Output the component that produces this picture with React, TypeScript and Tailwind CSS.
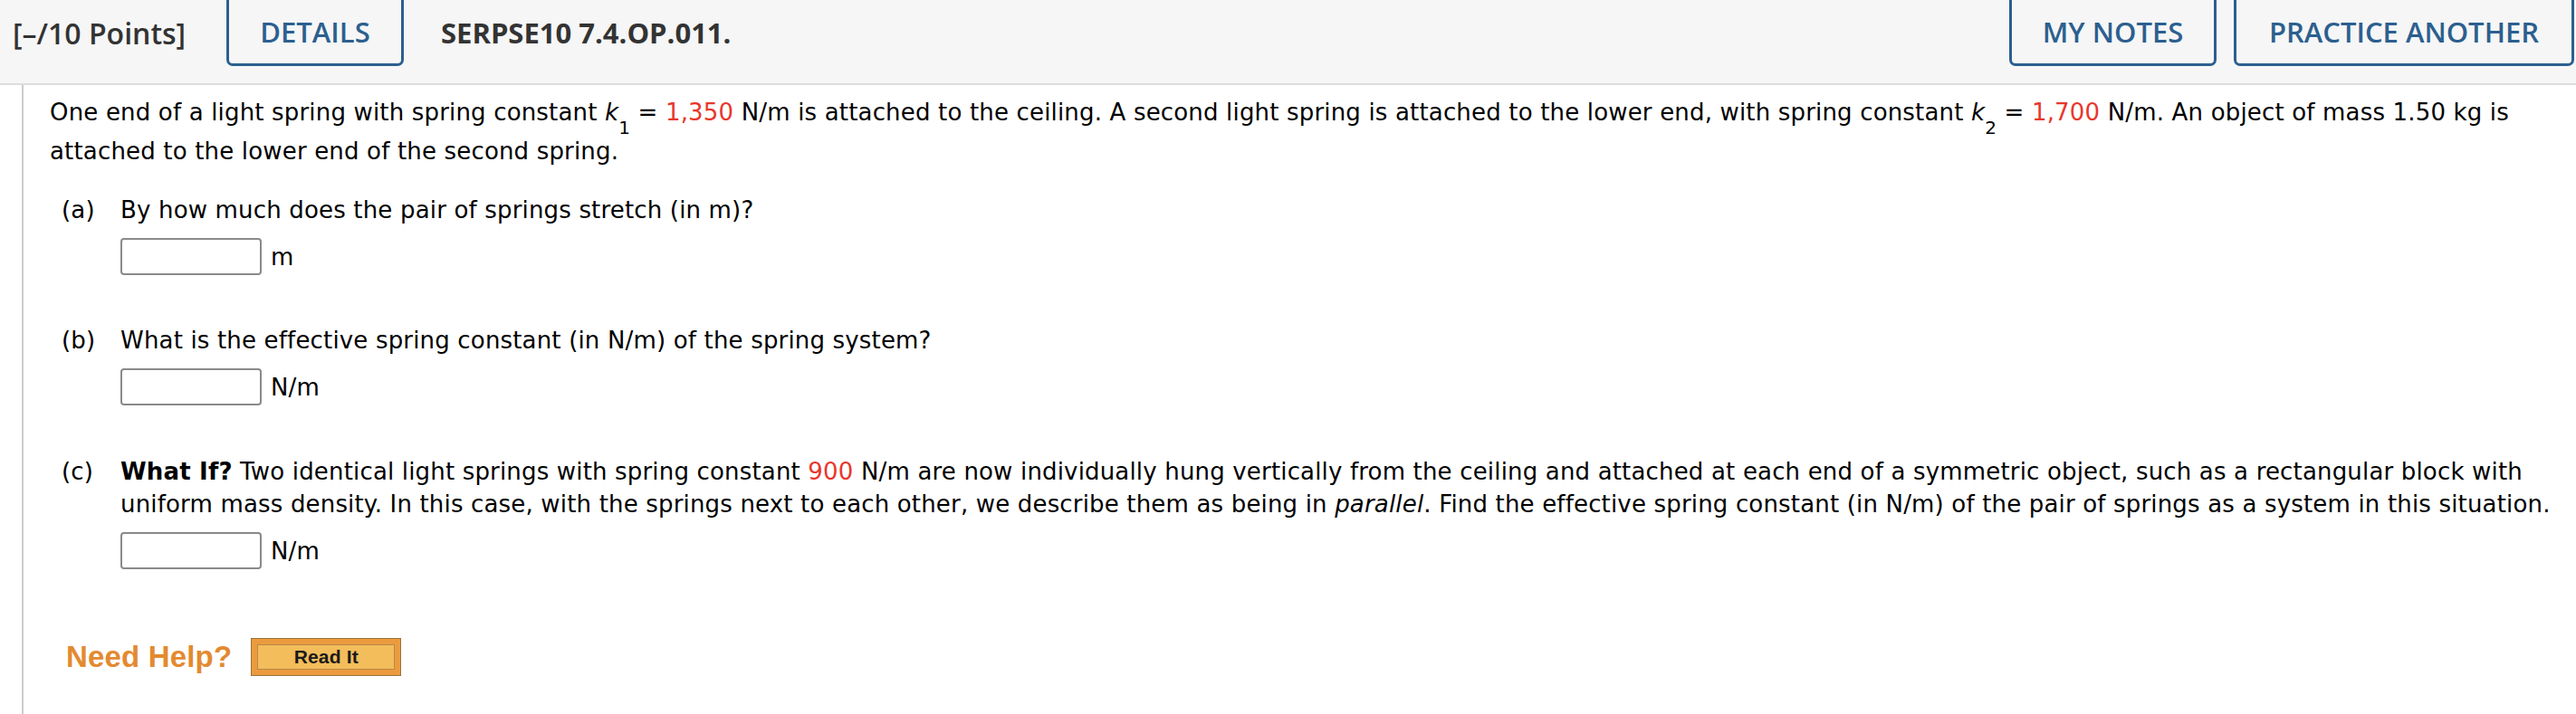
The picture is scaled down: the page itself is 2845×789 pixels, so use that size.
const Red = ({ children }: { children: React.ReactNode }) => (
  <span className="text-[#e8372c]">{children}</span>
);

const K = ({ n }: { n: string }) => (
  <span>
    <i>k</i>
    <sub className="text-[20px] align-[-10px] leading-none">{n}</sub>
  </span>
);

const AnswerBox = ({ unit }: { unit: string }) => (
  <div className="flex items-center gap-[10px]">
    <input
      type="text"
      className="w-[156px] h-[41px] rounded-[4px] border-2 border-[#8a8a8a] bg-white outline-none"
    />
    <span>{unit}</span>
  </div>
);

const Part = ({
  label,
  children,
  unit,
  className,
}: {
  label: string;
  children: React.ReactNode;
  unit: string;
  className?: string;
}) => (
  <div className={`flex pl-[13px] ${className ?? ""}`}>
    <div className="w-[65px] shrink-0">{label}</div>
    <div className="flex flex-col">
      <p>{children}</p>
      <div className="mt-[13px]">
        <AnswerBox unit={unit} />
      </div>
    </div>
  </div>
);

const headerBtn =
  "h-[73px] shrink-0 flex items-center justify-center border-[3px] border-t-0 border-[#2c5f8f] rounded-b-[7px] text-[#2c5f8f] font-semibold text-[31px]";

export default function App() {
  return (
    <div className="w-[2845px] min-h-[789px] bg-white flex flex-col">
      <header className="h-[94px] shrink-0 flex items-start bg-[#f6f6f6] border-b-2 border-[#dcdcdc] font-['Open_Sans',sans-serif]">
        <span className="w-[250px] shrink-0 pl-[14px] h-[73px] flex items-center font-semibold text-[32px] text-[#333333]">
          [–/10 Points]
        </span>
        <button className={`${headerBtn} w-[196px]`}>DETAILS</button>
        <span className="ml-[41px] h-[73px] flex items-center font-bold text-[31px] text-[#333333]">
          SERPSE10 7.4.OP.011.
        </span>
        <div className="ml-auto mr-[2px] flex gap-[19px]">
          <button className={`${headerBtn} w-[229px]`}>MY NOTES</button>
          <button className={`${headerBtn} w-[376px]`}>PRACTICE ANOTHER</button>
        </div>
      </header>

      <main className="flex-1 ml-[24px] border-l-2 border-[#cccccc] pl-[29px] pt-[9px] font-['DejaVu_Sans',Verdana,sans-serif] text-[26px] tracking-[0.17px] leading-[36px] text-black">
        <p className="leading-[42px]">
          One end of a light spring with spring constant <K n="1" /> ={" "}
          <Red>1,350</Red> N/m is attached to the ceiling. A second light spring is attached to
          the lower end, with spring constant <K n="2" /> = <Red>1,700</Red> N/m. An object of
          mass 1.50 kg is
          <br />
          attached to the lower end of the second spring.
        </p>

        <Part label="(a)" unit="m" className="mt-[26px]">
          By how much does the pair of springs stretch (in m)?
        </Part>

        <Part label="(b)" unit="N/m" className="mt-[54px]">
          What is the effective spring constant (in N/m) of the spring system?
        </Part>

        <Part label="(c)" unit="N/m" className="mt-[55px]">
          <b>What If?</b> Two identical light springs with spring constant <Red>900</Red> N/m are
          now individually hung vertically from the ceiling and attached at each end of a
          symmetric object, such as a rectangular block with
          <br />
          uniform mass density. In this case, with the springs next to each other, we describe
          them as being in <i>parallel</i>. Find the effective spring constant (in N/m) of the
          pair of springs as a system in this situation.
        </Part>

        <div className="flex items-center mt-[76px] pl-[18px] gap-[21px]">
          <span className="font-['Liberation_Sans',Arial,sans-serif] font-bold text-[33px] leading-[42px] text-[#e38a30]">
            Need Help?
          </span>
          <button className="w-[166px] h-[42px] p-[6px] border border-[#9c7238] bg-[#eb9b3d] flex">
            <span className="flex-1 flex items-center justify-center border border-[#b9894a] bg-[#f3bd5b] font-['Liberation_Sans',Arial,sans-serif] font-bold text-[21px] text-[#1a1a1a]">
              Read It
            </span>
          </button>
        </div>
      </main>
    </div>
  );
}
